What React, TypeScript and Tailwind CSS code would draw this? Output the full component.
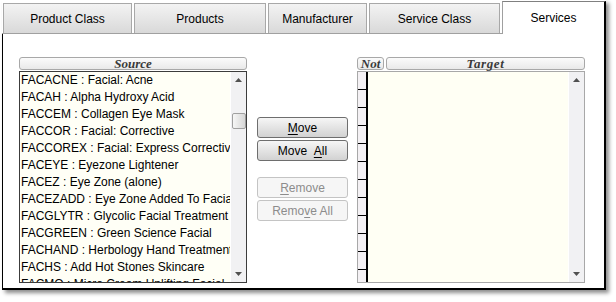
const SOURCE_ITEMS = [
  "FACACNE : Facial: Acne",
  "FACAH : Alpha Hydroxy Acid",
  "FACCEM : Collagen Eye Mask",
  "FACCOR : Facial: Corrective",
  "FACCOREX : Facial: Express Corrective",
  "FACEYE : Eyezone Lightener",
  "FACEZ : Eye Zone (alone)",
  "FACEZADD : Eye Zone Added To Facial",
  "FACGLYTR : Glycolic Facial Treatment",
  "FACGREEN : Green Science Facial",
  "FACHAND : Herbology Hand Treatment",
  "FACHS : Add Hot Stones Skincare",
  "FACMQ : Micro Cream Uplifting Facial",
];

const TABS = [
  { label: "Product Class", w: "w-[129px]" },
  { label: "Products", w: "w-[132px]" },
  { label: "Manufacturer", w: "w-[99px]" },
  { label: "Service Class", w: "w-[131px]" },
];

const sans = "font-['Liberation_Sans',Arial,sans-serif]";
const serif = "font-['Liberation_Serif','Times_New_Roman',serif]";

function UpArrow() {
  return (
    <svg width="7" height="4" viewBox="0 0 7 4" className="block">
      <path d="M0 4 L3.5 0 L7 4 Z" fill="#505050" />
    </svg>
  );
}

function DownArrow() {
  return (
    <svg width="7" height="4" viewBox="0 0 7 4" className="block">
      <path d="M0 0 L3.5 4 L7 0 Z" fill="#505050" />
    </svg>
  );
}

function ScrollBar({ thumb }: { thumb?: boolean }) {
  return (
    <div className="flex w-[16px] flex-col items-center border-l border-white bg-[#f1f1f3]">
      <div className="flex h-[16px] w-full items-center justify-center">
        <UpArrow />
      </div>
      {thumb ? (
        <div className="mt-[25px] h-[16px] w-[14px] rounded-[2px] border border-[#a0a0a0] bg-gradient-to-r from-[#f6f6f6] to-[#d6d6d6]" />
      ) : null}
      <div className="flex-1" />
      <div className="flex h-[16px] w-full items-center justify-center">
        <DownArrow />
      </div>
    </div>
  );
}

function Header({ label, className }: { label: string; className?: string }) {
  return (
    <div
      className={`flex h-[13px] items-center justify-center rounded-[3px] border border-[#a8a8a8] bg-gradient-to-b from-[#fbfbfb] to-[#e9e9e9] text-[13px] leading-[13px] font-bold italic text-[#3a3a3a] ${serif} ${className ?? ""}`}
    >
      {label}
    </div>
  );
}

function Btn({ children, disabled }: { children: React.ReactNode; disabled?: boolean }) {
  return (
    <div
      className={
        disabled
          ? `flex h-[21px] items-center justify-center rounded-[3px] border border-[#c4c4c4] bg-[#f6f6f6] text-[12px] text-[#8c8c8c] ${sans}`
          : `flex h-[21px] items-center justify-center rounded-[3px] border border-[#6e6e6e] bg-gradient-to-b from-[#f6f6f6] to-[#d2d2d2] text-[12px] text-black ${sans}`
      }
    >
      {children}
    </div>
  );
}

export default function App() {
  return (
    <div className="h-[302px] w-[616px] overflow-hidden bg-white pl-[2px]">
      <div className="w-[604px] shadow-[3px_3px_4px_rgba(0,0,0,0.45)]">
        {/* tabs */}
        <div className="flex h-[34px] items-end gap-[2px] border-b border-[#a0a0a0] bg-white pl-[1px]">
          {TABS.map((t) => (
            <div
              key={t.label}
              className={`flex h-[30px] ${t.w} items-center justify-center border-x border-t border-[#a8a8a8] bg-gradient-to-b from-[#f3f3f3] to-[#d9d9d9] pt-[1px] text-[12px] text-black ${sans}`}
            >
              {t.label}
            </div>
          ))}
          <div
            className={`relative z-10 -mb-px flex h-[33px] w-[104px] justify-center border-t border-l border-r-2 border-t-[#808080] border-l-[#a0a0a0] border-r-black bg-white pt-[9px] text-[12px] leading-[14px] text-black ${sans}`}
          >
            Services
          </div>
        </div>

        {/* content */}
        <div className="flex h-[256px] items-start border-l border-r-2 border-b-2 border-black bg-white pt-[23px] pl-[16px]">
          {/* source */}
          <div className="w-[228px]">
            <Header label="Source" />
            <div className="mt-[1px] flex h-[212px] border border-[#3c3c3c] bg-[#fffff6]">
              <div className={`flex-1 overflow-hidden pl-[1px] text-[12px] text-black ${sans}`}>
                {SOURCE_ITEMS.map((s) => (
                  <div key={s} className="h-[17px] whitespace-nowrap leading-[17px]">
                    {s}
                  </div>
                ))}
              </div>
              <ScrollBar thumb />
            </div>
          </div>

          {/* buttons */}
          <div className="mt-[60px] ml-[10px] flex w-[91px] flex-col gap-[2px]">
            <Btn>
              <span className="underline underline-offset-2">M</span>ove
            </Btn>
            <Btn>
              Move&nbsp;&nbsp;<span className="underline underline-offset-2">A</span>ll
            </Btn>
            <div className="mt-[14px] flex flex-col gap-[2px]">
              <Btn disabled>
                <span className="underline underline-offset-2">R</span>emove
              </Btn>
              <Btn disabled>
                Remo<span className="underline underline-offset-2">v</span>e All
              </Btn>
            </div>
          </div>

          {/* target */}
          <div className="ml-[9px] w-[228px]">
            <div className="flex gap-[2px]">
              <Header label="Not" className="w-[27px]" />
              <Header label="Target" className="flex-1 tracking-[0.6px]" />
            </div>
            <div className="mt-[1px] flex h-[212px] border border-[#a8a8a8] bg-[#fffff4]">
              <div className="w-[10px] border-r-2 border-black bg-[#f4f1f4]">
                {Array.from({ length: 11 }).map((_, i) => (
                  <div key={i} className="h-[18px] border-b border-black" />
                ))}
              </div>
              <div className="flex-1" />
              <ScrollBar />
            </div>
          </div>
        </div>
      </div>
    </div>
  );
}
